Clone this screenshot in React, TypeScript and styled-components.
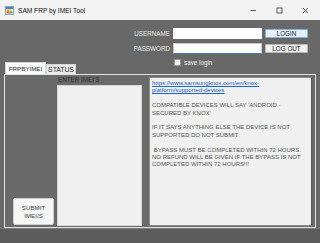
import React from 'react'
import styled, { createGlobalStyle } from 'styled-components'

const GlobalStyle = createGlobalStyle`
  html, body {
    margin: 0;
    padding: 0;
    background: #686868;
  }
  * {
    box-sizing: border-box;
  }
`

const Window = styled.div`
  width: 320px;
  height: 243px;
  display: flex;
  flex-direction: column;
  overflow: hidden;
  font-family: 'Liberation Sans', Arial, sans-serif;
  background: #686868;
`

const TitleBar = styled.div`
  height: 20px;
  flex: none;
  display: flex;
  align-items: center;
  padding-left: 5px;
  background: #f3f3f3;
`

const Title = styled.span`
  margin-left: 4px;
  font-size: 6.6px;
  color: #111;
`

const Controls = styled.div`
  margin-left: auto;
  margin-right: 2px;
  display: flex;
  height: 100%;
`

const ControlButton = styled.div`
  width: 26px;
  height: 100%;
  display: flex;
  align-items: center;
  justify-content: center;
`

const Body = styled.div`
  flex: 1;
  display: flex;
  flex-direction: column;
`

const LoginGrid = styled.div`
  display: grid;
  grid-template-columns: auto 89px 43px;
  grid-template-rows: 11px 11px 8px;
  column-gap: 3px;
  row-gap: 4px;
  align-items: center;
  justify-content: end;
  padding: 8px 12px 0 0;
`

const FieldLabel = styled.label`
  font-size: 6.3px;
  color: #ececec;
  text-align: right;
`

const TextInput = styled.div<{ focused?: boolean }>`
  height: 11px;
  background: #ffffff;
  border: 1px solid ${({ focused }) => (focused ? '#c8c8c8' : '#ffffff')};
  border-bottom: 1px solid ${({ focused }) => (focused ? '#3a78c2' : '#ffffff')};
`

const FormButton = styled.div<{ primary?: boolean }>`
  height: 9px;
  display: flex;
  align-items: center;
  justify-content: center;
  font-size: 6.3px;
  color: #222;
  background: ${({ primary }) => (primary ? '#e6eef7' : '#f0f0f0')};
  border: 1px solid ${({ primary }) => (primary ? '#7ab3e4' : '#b8b8b8')};
  border-radius: 1px;
`

const SaveRow = styled.div`
  grid-column: 2 / span 2;
  display: flex;
  align-items: center;
  gap: 3px;
  padding-left: 1px;
`

const CheckBox = styled.span`
  width: 7px;
  height: 7px;
  background: #f4f4f4;
  border: 1px solid #9a9a9a;
`

const SaveText = styled.span`
  font-size: 6.3px;
  color: #f0f0f0;
`

const TabStrip = styled.div`
  margin-top: -4px;
  height: 12px;
  display: flex;
  align-items: flex-end;
  padding-left: 5px;
`

const Tab = styled.div<{ active?: boolean }>`
  width: ${({ active }) => (active ? 41 : 30)}px;
  height: ${({ active }) => (active ? 12 : 10)}px;
  display: flex;
  align-items: center;
  justify-content: center;
  font-size: ${({ active }) => (active ? 6.2 : 6.8)}px;
  color: #2a2a2a;
  background: ${({ active }) => (active ? '#fafafa' : '#e9e9e9')};
  border: 1px solid #d4d4d4;
  border-bottom: none;
`

const Panel = styled.div`
  height: 154px;
  margin: 0 4px;
  display: flex;
  padding: 2px 3px 1px 0;
  border: 1px solid #e4e4e4;
  background: #6a6a6a;
`

const SubmitColumn = styled.div`
  width: 52px;
  display: flex;
  align-items: flex-end;
  padding: 0 0 1px 8px;
`

const SubmitButton = styled.div`
  width: 41px;
  height: 27px;
  display: flex;
  flex-direction: column;
  align-items: center;
  justify-content: center;
  font-size: 6.2px;
  line-height: 7.6px;
  color: #3e3e3e;
  background: #f6f6f6;
  border: 1px solid #cfcfcf;
  border-radius: 2px;
`

const ImeiColumn = styled.div`
  width: 85px;
  display: flex;
  flex-direction: column;
`

const ImeiLabel = styled.div`
  height: 6px;
  padding-left: 1px;
  margin-bottom: 2px;
  font-size: 6.3px;
  line-height: 6px;
  color: #2e2e2e;
`

const ImeiBox = styled.div`
  flex: 1;
  background: #f0f0f0;
  border: 1px solid #d6d6d6;
`

const InfoBox = styled.div`
  flex: 1;
  margin-left: 7px;
  padding: 2px 2px;
  background: #f0f0f0;
  border: 1px solid #8c8c8c;
  border-right-color: #5a5a5a;
  font-size: 6px;
  line-height: 7.4px;
  color: #555;
`

const Line = styled.div`
  white-space: pre;
`

const Gap = styled.div`
  height: 7.4px;
`

const Link = styled.a`
  display: block;
  color: #1a62c8;
  text-decoration: underline;
  white-space: pre;
`

const Footer = styled.div`
  flex: 1;
  background: #5d5d5d;
  border-top: 1px solid #7a7a7a;
`

const AppIcon = () => (
  <svg width="9" height="9" viewBox="0 0 9 9">
    <rect x="0.5" y="0.5" width="8" height="8" fill="#ffffff" stroke="#8aa9c9" />
    <rect x="1" y="1" width="7" height="2" fill="#3d7fd0" />
    <rect x="1.5" y="3.5" width="3" height="2" fill="#f09b2c" />
    <rect x="4.5" y="3.5" width="3" height="2" fill="#f5d13a" />
    <rect x="1.5" y="5.5" width="3" height="2" fill="#e8553a" />
    <rect x="4.5" y="5.5" width="3" height="2" fill="#5aa34a" />
  </svg>
)

const MinimizeIcon = () => (
  <svg width="7" height="7" viewBox="0 0 7 7">
    <line x1="1" y1="3.5" x2="6" y2="3.5" stroke="#333" strokeWidth="0.8" />
  </svg>
)

const MaximizeIcon = () => (
  <svg width="7" height="7" viewBox="0 0 7 7">
    <rect x="1" y="1" width="5" height="5" fill="none" stroke="#333" strokeWidth="0.8" />
  </svg>
)

const CloseIcon = () => (
  <svg width="7" height="7" viewBox="0 0 7 7">
    <path d="M1 1 L6 6 M6 1 L1 6" stroke="#333" strokeWidth="0.8" />
  </svg>
)

const App = () => {
  return (
    <Window>
      <GlobalStyle />
      <TitleBar>
        <AppIcon />
        <Title>SAM FRP by IMEI Tool</Title>
        <Controls>
          <ControlButton>
            <MinimizeIcon />
          </ControlButton>
          <ControlButton>
            <MaximizeIcon />
          </ControlButton>
          <ControlButton>
            <CloseIcon />
          </ControlButton>
        </Controls>
      </TitleBar>
      <Body>
        <LoginGrid>
          <FieldLabel>USERNAME</FieldLabel>
          <TextInput />
          <FormButton primary>LOGIN</FormButton>
          <FieldLabel>PASSWORD</FieldLabel>
          <TextInput focused />
          <FormButton>LOG OUT</FormButton>
          <span />
          <SaveRow>
            <CheckBox />
            <SaveText>save login</SaveText>
          </SaveRow>
        </LoginGrid>
        <TabStrip>
          <Tab active>FRPBYIMEI</Tab>
          <Tab>STATUS</Tab>
        </TabStrip>
        <Panel>
          <SubmitColumn>
            <SubmitButton>
              <span>SUBMIT</span>
              <span>IMEI/S</span>
            </SubmitButton>
          </SubmitColumn>
          <ImeiColumn>
            <ImeiLabel>ENTER IMEI'S</ImeiLabel>
            <ImeiBox />
          </ImeiColumn>
          <InfoBox>
            <Link href="#">https://www.samsungknox.com/en/knox-{'\n'}platform/supported-devices</Link>
            <Gap />
            <Line>COMPATIBLE DEVICES WILL SAY 'ANDROID -</Line>
            <Line>SECURED BY KNOX'</Line>
            <Gap />
            <Line>IF IT SAYS ANYTHING ELSE THE DEVICE IS NOT</Line>
            <Line>SUPPORTED.DO NOT SUBMIT</Line>
            <Gap />
            <Line> BYPASS MUST BE COMPLETED WITHIN 72 HOURS.</Line>
            <Line>NO REFUND WILL BE GIVEN IF THE BYPASS IS NOT</Line>
            <Line>COMPLETED WITHIN 72 HOURS!!!</Line>
          </InfoBox>
        </Panel>
        <Footer />
      </Body>
    </Window>
  )
}

export default App
